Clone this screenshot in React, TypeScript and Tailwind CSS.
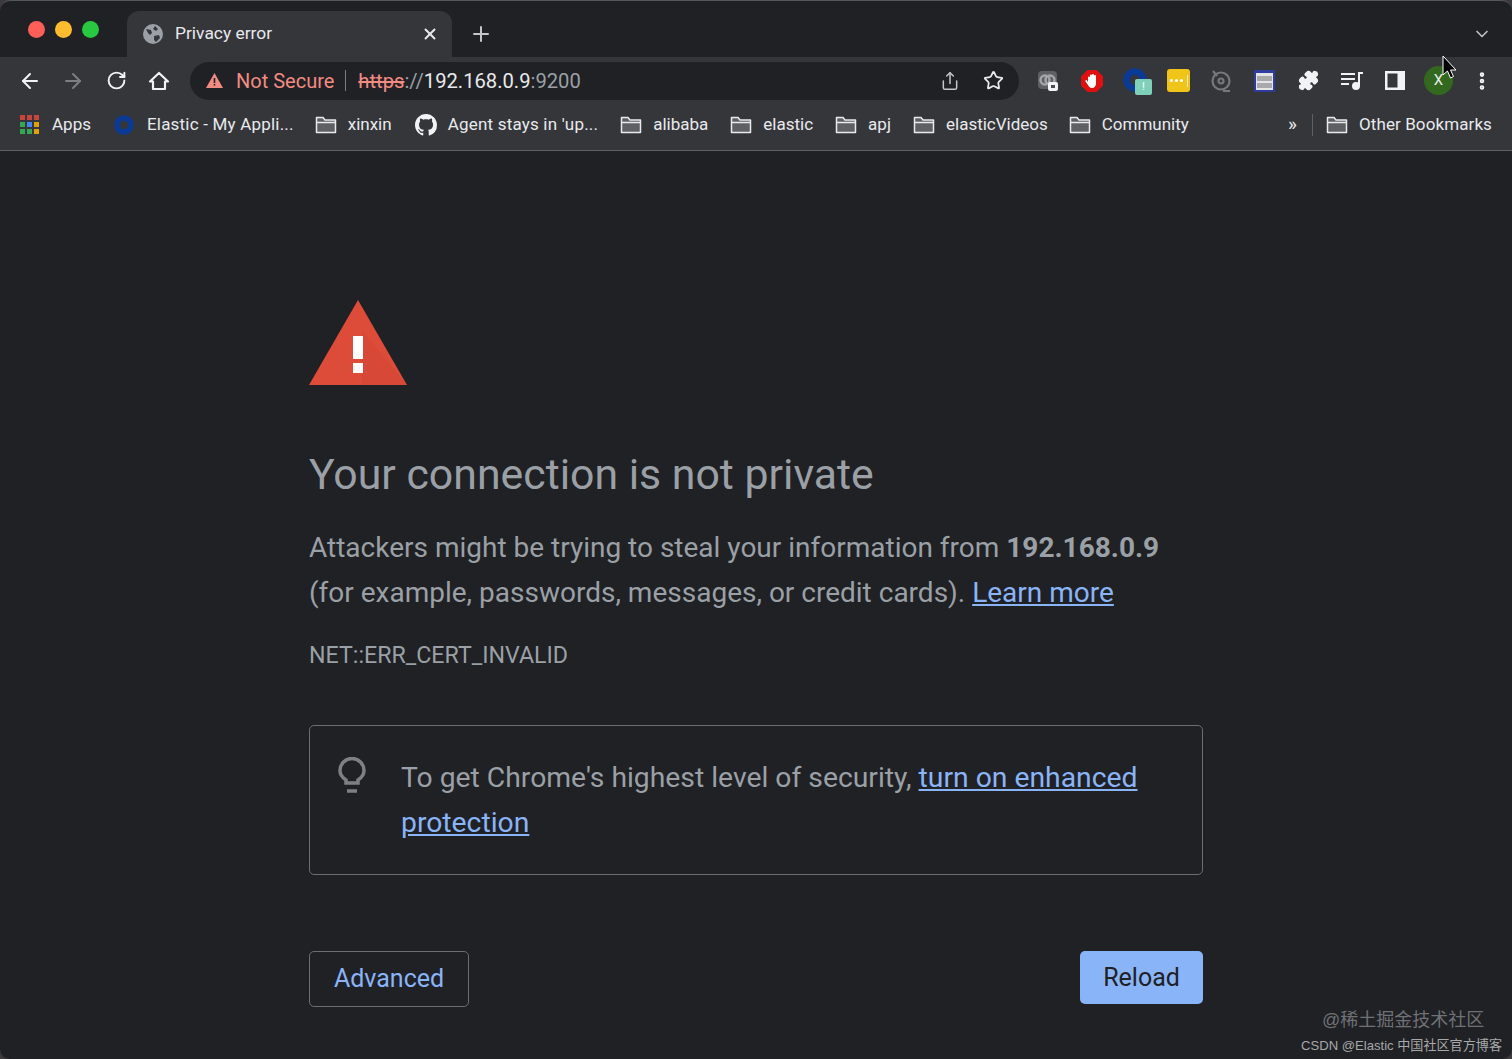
import React from 'react';
import { ArrowLeft, ArrowRight, RotateCw, Star, Share, X, Plus, ChevronDown, Puzzle, EllipsisVertical } from 'lucide-react';

const Folder = () => (
  <svg width="22" height="18" viewBox="0 0 22 18" fill="none" className="shrink-0">
    <path d="M1.5 16.5V1.5h6.5l2 2.5h10.5v12.5z" fill="#5f6063" stroke="#e8eaed" strokeWidth="1.5" strokeLinejoin="round" />
    <path d="M1.5 6.5h19" stroke="#e8eaed" strokeWidth="1.5" />
  </svg>
);

const Github = () => (
  <svg width="22" height="22" viewBox="0 0 16 16" fill="#f1f3f4" className="shrink-0">
    <path d="M8 0C3.58 0 0 3.58 0 8c0 3.54 2.29 6.53 5.47 7.59.4.07.55-.17.55-.38 0-.19-.01-.82-.01-1.49-2.01.37-2.53-.49-2.69-.94-.09-.23-.48-.94-.82-1.13-.28-.15-.68-.52-.01-.53.63-.01 1.08.58 1.23.82.72 1.21 1.87.87 2.33.66.07-.52.28-.87.51-1.07-1.78-.2-3.64-.89-3.64-3.95 0-.87.31-1.59.82-2.15-.08-.2-.36-1.02.08-2.12 0 0 .67-.21 2.2.82.64-.18 1.32-.27 2-.27s1.36.09 2 .27c1.53-1.04 2.2-.82 2.2-.82.44 1.1.16 1.92.08 2.12.51.56.82 1.27.82 2.15 0 3.07-1.87 3.75-3.65 3.95.29.25.54.73.54 1.48 0 1.07-.01 1.93-.01 2.2 0 .21.15.46.55.38A8.01 8.01 0 0 0 16 8c0-4.42-3.58-8-8-8z" />
  </svg>
);

const AppsGrid = () => {
  const colors = ['#c9453c', '#c9453c', '#c9453c', '#34a853', '#4285f4', '#e0a008', '#34a853', '#34a853', '#e0a008'];
  return (
    <div className="grid grid-cols-3 gap-[2px] w-[19px] shrink-0">
      {colors.map((c, i) => (
        <svg key={i} width="5" height="5" viewBox="0 0 5 5"><rect width="5" height="5" fill={c} /></svg>
      ))}
    </div>
  );
};

const ElasticRing = ({ size = 20 }: { size?: number }) => (
  <svg width={size} height={size} viewBox="0 0 20 20" className="shrink-0">
    <circle cx="10" cy="10" r="7" fill="none" stroke="#0b3a94" strokeWidth="5.5" />
  </svg>
);

const Bookmark = ({ icon, label, className = '', labelClass = '' }: { icon: React.ReactNode; label: string; className?: string; labelClass?: string }) => (
  <div className={`flex items-center gap-[11px] shrink-0 ${className}`}>
    {icon}
    <span className={`text-[17px] text-[#e8eaed] whitespace-nowrap ${labelClass}`}>{label}</span>
  </div>
);

const ExtensionIcons = () => (
  <div className="flex items-center ml-[19px]">
    {/* meet-like */}
    <svg width="22" height="24" viewBox="0 0 22 24" className="shrink-0">
      <rect x="0" y="2" width="19" height="18" rx="4" fill="#5f6063" />
      <circle cx="7" cy="11" r="4.5" fill="none" stroke="#a4a5a8" strokeWidth="2.5" />
      <circle cx="12" cy="11" r="4.5" fill="none" stroke="#a4a5a8" strokeWidth="2.5" />
      <rect x="10" y="13" width="10" height="9" rx="2" fill="#f1f3f4" />
      <rect x="13" y="16" width="4" height="3" fill="#4a4b4e" />
    </svg>
    {/* adblock */}
    <svg width="24" height="24" viewBox="0 0 24 24" className="shrink-0 ml-[20px]">
      <path d="M7.5 1.5h9l6 6v9l-6 6h-9l-6-6v-9z" fill="#e01010" stroke="#e01010" strokeLinejoin="round" />
      <path d="M8 13V8.5a1 1 0 0 1 2 0V6.5a1 1 0 0 1 2 0v-.5a1 1 0 0 1 2 0v1a1 1 0 0 1 2 0v7c0 3-1.5 5-4 5-2 0-3-1-4-3l-2.500-3.500c-.5-1 .8-2 1.500-1z" fill="#fff" />
    </svg>
    {/* elastic with badge */}
    <div className="relative w-[30px] h-[32px] ml-[19px] shrink-0">
      <div className="absolute left-0 top-[3px]"><ElasticRing size={24} /></div>
      <div className="absolute left-[12px] top-[14px] w-[17px] h-[16px] rounded-[2px] bg-[#7fd0b9] text-white text-[11px] leading-[16px] text-center">!</div>
    </div>
    {/* password manager */}
    <div className="w-[23px] h-[23px] rounded-[3px] bg-[#f0c419] ml-[14px] flex items-center justify-center gap-[2px] shrink-0">
      <span className="w-[3px] h-[3px] rounded-full bg-white" />
      <span className="w-[3px] h-[3px] rounded-full bg-white" />
      <span className="w-[3px] h-[3px] rounded-full bg-white" />
      <span className="w-[1px] h-[12px] bg-white/70 ml-[2px]" />
    </div>
    {/* sync */}
    <svg width="22" height="24" viewBox="0 0 22 24" fill="none" stroke="#77787b" strokeWidth="2.200" className="shrink-0 ml-[20px]">
      <circle cx="11" cy="12" r="8.500" />
      <circle cx="11" cy="12" r="2.500" />
      <path d="M3 2l4 5M13 22h7" />
    </svg>
    {/* window */}
    <svg width="21" height="22" viewBox="0 0 21 22" className="shrink-0 ml-[22px]">
      <rect width="21" height="22" rx="1" fill="#2f3c9e" />
      <rect x="2" y="3" width="17" height="17" fill="#e4e4e4" />
      <rect x="3" y="6" width="15" height="5" fill="#a9a9ac" />
      <rect x="3" y="13" width="15" height="5" fill="#a9a9ac" />
    </svg>
    <Puzzle size={21} fill="#f1f3f4" color="#f1f3f4" className="shrink-0 ml-[23px]" />
    {/* media control */}
    <svg width="22" height="20" viewBox="0 0 22 20" fill="none" stroke="#f1f3f4" strokeWidth="2" className="shrink-0 ml-[22px]">
      <path d="M0 3h14M0 8h14M0 13h8" />
      <path d="M18 15V2h4" />
      <circle cx="15" cy="15" r="3" fill="#f1f3f4" />
    </svg>
    {/* side panel */}
    <svg width="20" height="19" viewBox="0 0 20 19" className="shrink-0 ml-[22px]">
      <rect width="20" height="19" fill="#f1f3f4" />
      <rect x="2.500" y="2.500" width="10" height="14" fill="#35363a" />
    </svg>
    {/* avatar */}
    <div className="w-[29px] h-[29px] rounded-full bg-[#33691e] ml-[19px] flex items-center justify-center text-[#e8eaed] text-[15px] shrink-0">X</div>
    <EllipsisVertical size={22} color="#f1f3f4" strokeWidth={3} className="shrink-0 ml-[18px]" />
  </div>
);

export default function App() {
  return (
    <div className="w-[1512px] h-[1059px] bg-[#3d3a3d] overflow-hidden">
      <div className="w-full h-full bg-[#202124] relative overflow-hidden rounded-[10px] border-t border-[#55575b] flex flex-col font-['Roboto','Liberation_Sans',sans-serif]">
        {/* tab strip */}
        <div className="h-[56px] shrink-0 flex items-end pl-[28px] pr-[20px]">
          <div className="flex items-center gap-[10px] h-[56px] w-[99px]">
            <span className="w-[17px] h-[17px] rounded-full bg-[#ff5f57]" />
            <span className="w-[17px] h-[17px] rounded-full bg-[#febc2e]" />
            <span className="w-[17px] h-[17px] rounded-full bg-[#28c840]" />
          </div>
          <div className="w-[325px] h-[46px] bg-[#35363a] rounded-t-[12px] flex items-center pl-[16px] pr-[13px]">
            <svg width="20" height="20" viewBox="0 0 20 20" className="shrink-0">
              <circle cx="10" cy="10" r="10" fill="#9aa0a6" />
              <path d="M3 5l5 1 1 3-2 2-2-2zM12 2l3 3-2 2-3-2zM11 12l5-1 1 3-4 4-2-2z" fill="#35363a" />
            </svg>
            <span className="ml-[12px] text-[17.4px] text-[#e8eaed] flex-1 -translate-y-[1px]">Privacy error</span>
            <X size={18} color="#e8eaed" strokeWidth={2.5} />
          </div>
          <div className="h-[46px] flex items-center ml-[17px] flex-1">
            <Plus size={24} color="#c4c7c9" strokeWidth={2} />
          </div>
          <div className="h-[46px] flex items-center">
            <ChevronDown size={20} color="#bdc1c6" strokeWidth={2} />
          </div>
        </div>

        {/* toolbar */}
        <div className="h-[47px] shrink-0 bg-[#35363a] flex items-center pl-[18px]">
          <ArrowLeft size={24} color="#f1f3f4" strokeWidth={2} className="shrink-0" />
          <ArrowRight size={24} color="#7d7e81" strokeWidth={2} className="shrink-0 ml-[19px]" />
          <RotateCw size={21} color="#f1f3f4" strokeWidth={2.2} className="shrink-0 ml-[21px]" />
          <svg width="22" height="22" viewBox="0 0 22 22" fill="none" stroke="#f1f3f4" strokeWidth="2.200" strokeLinejoin="round" className="shrink-0 ml-[21px]">
            <path d="M2 11.500 11 3l9 8.500h-3V19H5v-7.500z" />
          </svg>
          <div className="w-[829px] h-[38px] ml-[20px] rounded-full bg-[#202124] flex items-center pl-[16px] pr-[15px] shrink-0">
            <svg width="17" height="15" viewBox="0 0 17 15" className="shrink-0"><path d="M8.500 0 17 15H0z" fill="#f28b82" /><path d="M7.700 5h1.600v5H7.700zM7.700 11h1.600v1.600H7.700z" fill="#202124" /></svg>
            <span className="ml-[13px] text-[20px] text-[#f28b82]">Not Secure</span>
            <span className="w-[1px] h-[21px] bg-[#7d7e81] ml-[11px] mr-[12px]" />
            <span className="text-[20.2px] whitespace-nowrap pt-[1px]">
              <span className="text-[#f28b82] line-through">https</span>
              <span className="text-[#9aa0a6]">://</span>
              <span className="text-[#e8eaed]">192.168.0.9</span>
              <span className="text-[#9aa0a6]">:9200</span>
            </span>
            <div className="flex-1" />
            <Share size={20} color="#c4c7c9" strokeWidth={1.8} />
            <Star size={21} color="#e8eaed" strokeWidth={2} className="ml-[23px]" />
          </div>
          <ExtensionIcons />
        </div>

        {/* bookmarks bar */}
        <div className="h-[47px] shrink-0 bg-[#35363a] border-b border-[#5f6063] flex items-center pl-[20px] pr-[20px] pb-[5px]">
          <Bookmark icon={<AppsGrid />} label="Apps" className="!gap-[13px]" />
          <Bookmark icon={<ElasticRing />} label="Elastic - My Appli..." labelClass="tracking-[0.2px]" className="ml-[23px] !gap-[13px]" />
          <Bookmark icon={<Folder />} label="xinxin" className="ml-[21px]" />
          <Bookmark icon={<Github />} label="Agent stays in 'up..." labelClass="tracking-[0.2px]" className="ml-[23px]" />
          <Bookmark icon={<Folder />} label="alibaba" className="ml-[22px]" />
          <Bookmark icon={<Folder />} label="elastic" className="ml-[22px]" />
          <Bookmark icon={<Folder />} label="apj" className="ml-[22px]" />
          <Bookmark icon={<Folder />} label="elasticVideos" className="ml-[22px]" />
          <Bookmark icon={<Folder />} label="Community" className="ml-[21px]" />
          <div className="flex-1" />
          <span className="text-[19px] text-[#e8eaed]">»</span>
          <span className="w-[1px] h-[22px] bg-[#5f6063] ml-[15px] mr-[13px]" />
          <Bookmark icon={<Folder />} label="Other Bookmarks" labelClass="tracking-[0.1px]" />
        </div>

        {/* page */}
        <main className="flex-1 pl-[309px] pt-[149px] text-[#9aa0a6]">
          <div className="w-[894px]">
            <svg width="98" height="86" viewBox="0 0 98 86" className="block">
              <path d="M49 0 98 85H0z" fill="#dd4b39" />
              <path d="M53 30l45 55H53z" fill="#c9402f" opacity="0.25" />
              <rect x="44" y="36" width="10" height="23" fill="#fff" />
              <rect x="44" y="63" width="10" height="10" fill="#fff" />
            </svg>
            <h1 className="mt-[60px] text-[42.8px] leading-[56px] font-normal text-[#9aa0a6]">Your connection is not private</h1>
            <p className="mt-[23px] text-[28px] leading-[45px]">
              Attackers might be trying to steal your information from <b className="font-bold">192.168.0.9</b>
              <br />
              (for example, passwords, messages, or credit cards). <a className="text-[#8ab4f8] underline">Learn more</a>
            </p>
            <p className="mt-[25px] text-[23.2px] leading-[30px]">NET::ERR_CERT_INVALID</p>
            <div className="mt-[55px] h-[150px] border border-[#6b6e72] rounded-[5px] flex pl-[26px] pt-[29px]">
              <svg width="32" height="38" viewBox="0 0 32 38" fill="none" stroke="#7d8085" strokeWidth="3.500" className="shrink-0 mt-[2px]">
                <path d="M10 26v-3c-3-2-6-5-6-9.500a12 12 0 0 1 24 0c0 4.500-3 7.500-6 9.500v3z" />
                <path d="M11 34h10" />
              </svg>
              <p className="ml-[33px] text-[28.3px] leading-[45px] whitespace-nowrap">
                To get Chrome's highest level of security, <a className="text-[#8ab4f8] underline">turn on enhanced</a>
                <br />
                <a className="text-[#8ab4f8] underline">protection</a>
              </p>
            </div>
            <div className="mt-[76px] flex justify-between items-start">
              <button className="w-[160px] h-[56px] border border-[#6b6e72] rounded-[5px] text-[#8ab4f8] text-[25px]">Advanced</button>
              <button className="w-[123px] h-[53px] bg-[#8ab4f8] rounded-[5px] text-[#202124] text-[25px]">Reload</button>
            </div>
          </div>
        </main>

        {/* cursor */}
        <svg width="16" height="26" viewBox="0 0 16 26" className="absolute left-[1442px] top-[54px]">
          <path d="M1 1v19l4.500-4 3 7 3-1.500-3-6.500H14z" fill="#000" stroke="#fff" strokeWidth="1" />
        </svg>

        {/* watermarks */}
        <div className="absolute left-[1322px] top-[1006px] text-[18px] leading-[26px] text-[#6f7174] whitespace-nowrap font-['Liberation_Sans','Noto_Sans_CJK_SC',sans-serif]">@稀土掘金技术社区</div>
        <div className="absolute left-[1301px] top-[1035px] text-[13.1px] leading-[20px] text-[#a6a8aa] whitespace-nowrap font-['Liberation_Sans','Noto_Sans_CJK_SC',sans-serif]">CSDN @Elastic 中国社区官方博客</div>
      </div>
    </div>
  );
}
